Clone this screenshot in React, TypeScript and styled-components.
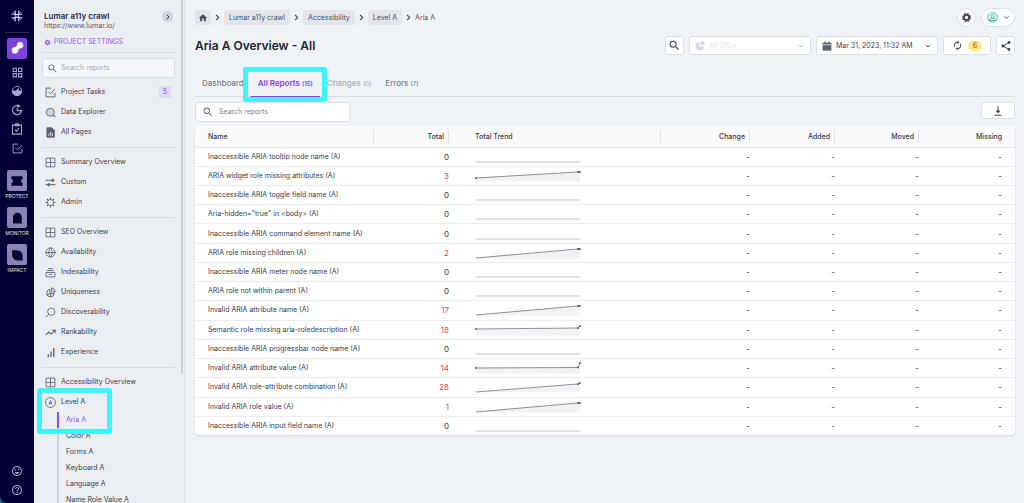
import React from "react";
import styled, { createGlobalStyle, css } from "styled-components";
import {
  MdSearch,
  MdOutlineGridView,
  MdHelpOutline,
  MdOutlineEmojiEmotions,
  MdHome,
  MdShare,
  MdAutorenew,
} from "react-icons/md";
import { HiCog } from "react-icons/hi";
import { ChevronDown, ChevronRight, Globe, TrendingUp } from "lucide-react";

const GlobalStyle = createGlobalStyle`
  *, *::before, *::after { box-sizing: border-box; }
  html, body { margin: 0; height: 100%; overflow: hidden; }
  body { font-family: Inter, "Liberation Sans", sans-serif; font-size: 7px; line-height: 10px; color: #353b4a; background: #1f6391; }
  #root { height: 100%; }
  ul, ol { list-style: none; margin: 0; padding: 0; }
  a { color: inherit; text-decoration: none; }
  button, input, select { font: inherit; color: inherit; margin: 0; }
  button { cursor: pointer; }
  svg { display: block; flex: none; }
`;

const Shell = styled.div`
  display: flex;
  height: 100vh;
  overflow: hidden;
  border-radius: 0 0 0 6px;
  background: #eff3f8;
`;

/* ---------- icon rail ---------- */

const Rail = styled.nav`
  flex: none;
  width: 34px;
  display: flex;
  flex-direction: column;
  align-items: center;
  padding: 8px 0 7px;
  background: #020034;
  color: #a9a4cb;
`;

const RailDivider = styled.hr`
  width: 24px;
  height: 1px;
  margin: 8px 0 5px;
  border: 0;
  background: #2c2a4e;
`;

const RailGroup = styled.div`
  display: flex;
  flex-direction: column;
  align-items: center;
  gap: 7px;
`;

const RailLink = styled.a`
  display: flex;
  align-items: center;
  justify-content: center;
  width: 20px;
  height: 12px;
`;

const RailActive = styled.a`
  display: flex;
  align-items: center;
  justify-content: center;
  width: 20px;
  height: 21px;
  border-radius: 2px;
  background: #7c42de;
  color: #fff;
`;

const RailProduct = styled.a`
  display: flex;
  flex-direction: column;
  align-items: center;
  gap: 1px;
  font-size: 5px;
  line-height: 8px;
  color: #e4e1f2;
`;

const ProductTile = styled.span`
  display: flex;
  align-items: center;
  justify-content: center;
  width: 20px;
  height: 21px;
  border-radius: 2px;
  background: #8d82b4;
  color: #020034;
`;

const RailProducts = styled(RailGroup)`
  margin-top: 16px;
`;

const RailFooter = styled(RailGroup)`
  margin-top: auto;
`;

/* ---------- sidebar ---------- */

const Sidebar = styled.aside`
  flex: none;
  display: flex;
  width: 151px;
  border-right: 1px solid #dfe2ea;
  background: #eaedf2;
`;

const SidebarBody = styled.div`
  flex: 1;
  min-width: 0;
  padding: 11px 6px 0 8px;
`;

const ScrollTrack = styled.div`
  width: 3px;
`;

const ScrollThumb = styled.div`
  width: 2px;
  height: 374px;
  border-radius: 0 0 1px 1px;
  background: #cdd0da;
`;

const ProjectHeader = styled.header`
  display: flex;
  justify-content: space-between;
  padding: 0 2px;
`;

const ProjectName = styled.h2`
  margin: 0;
  font-size: 8px;
  line-height: 10px;
  font-weight: 600;
  color: #252b3b;
`;

const ProjectUrl = styled.p`
  margin: 0;
  color: #555b6b;
`;

const CollapseButton = styled.button`
  display: flex;
  align-items: center;
  justify-content: center;
  width: 11px;
  height: 11px;
  padding: 0;
  border: 0;
  border-radius: 50%;
  background: #ced2dc;
  color: #353b4a;
`;

const SettingsLink = styled.a`
  display: flex;
  align-items: center;
  gap: 3px;
  margin-top: 6px;
  padding: 0 2px 5px;
  color: #9257ea;
`;

const SearchField = styled.label<{ $wide?: boolean }>`
  display: flex;
  align-items: center;
  gap: ${(p) => (p.$wide ? "5px" : "3px")};
  width: ${(p) => (p.$wide ? "155px" : "100%")};
  height: 20px;
  padding: 0 5px;
  padding-left: ${(p) => (p.$wide ? "6px" : "4px")};
  border: 1px solid #d9dde5;
  border-radius: 3px;
  background: ${(p) => (p.$wide ? "#fff" : "#f5f7fb")};
  color: #666c7b;

  input {
    flex: 1;
    min-width: 0;
    padding: 0;
    border: 0;
    outline: 0;
    background: none;
    font-size: 7px;
  }
  input::placeholder {
    color: ${(p) => (p.$wide ? "#797e8b" : "#a3a7b1")};
    opacity: 1;
  }
`;

const Section = styled.ul`
  padding: 4px 0 5px;
  border-top: 1px solid #d8dbe2;
`;

const SearchSection = styled.div`
  padding-top: 5px;
  border-top: 1px solid #d8dbe2;

  & + ${Section} {
    border-top: 0;
  }
`;

const NavItem = styled.li`
  position: relative;
`;

const NavLink = styled.a`
  display: flex;
  align-items: center;
  gap: 5px;
  height: 20px;
  padding: 0 4px 0 3px;
  font-size: 7px;
  color: #3b4150;

  svg {
    color: #596070;
  }
`;

const NavCount = styled.span`
  margin-left: auto;
  width: 12px;
  border-radius: 2px;
  line-height: 12px;
  text-align: center;
  background: #e2d8f6;
  color: #8a4fe6;
`;

const SubLink = styled.a<{ $active?: boolean }>`
  display: block;
  height: 16px;
  margin-left: 15px;
  padding-left: 7px;
  border-left: 2px solid ${(p) => (p.$active ? "#8a4fe6" : "#cfd2dc")};
  line-height: 16px;
  color: ${(p) => (p.$active ? "#9257ea" : "#3b4150")};
`;

const highlight = css`
  position: absolute;
  z-index: 2;
  border: 5px solid #41f3fd;
  border-radius: 3px;
  pointer-events: none;
`;

const NavHighlight = styled.span`
  ${highlight}
  top: -4px;
  left: -5px;
  width: 75px;
  height: 46px;
`;

/* ---------- main area ---------- */

const Main = styled.main`
  flex: 1;
  min-width: 0;
  padding: 8px 9px 0 10px;
`;

const Row = styled.div`
  display: flex;
  align-items: center;
  justify-content: space-between;
`;

const Crumbs = styled.ol`
  display: flex;
  align-items: center;
  gap: 2px;
  color: #4a5060;

  li {
    display: flex;
    align-items: center;
    gap: 2px;
  }
`;

const Crumb = styled.a`
  display: flex;
  align-items: center;
  height: 15px;
  padding: 0 5px;
  border-radius: 3px;
  background: #e3e5eb;
`;

const HomeCrumb = styled(Crumb)`
  padding: 0 3px;
`;

const Actions = styled.div`
  display: flex;
  gap: 5px;
`;

const Button = styled.button<{ $w?: number; $round?: boolean; $short?: boolean }>`
  display: flex;
  align-items: center;
  justify-content: center;
  gap: 5px;
  width: ${(p) => p.$w ?? 19}px;
  height: ${(p) => (p.$short ? 17 : 19)}px;
  padding: 0;
  border: 1px solid #dcdfe7;
  border-radius: ${(p) => (p.$round ? "10px" : "3px")};
  background: #fff;
  color: #3c4253;
`;

const TitleRow = styled(Row)`
  margin-top: 9px;
`;

const Title = styled.h1`
  margin: 0;
  font-size: 12px;
  line-height: 16px;
  font-weight: 600;
  color: #1f2433;
`;

const SelectBox = styled.label<{ $muted?: boolean }>`
  display: flex;
  align-items: center;
  gap: 4px;
  width: 122px;
  height: 19px;
  padding: 0 5px;
  border: 1px solid #dcdfe7;
  border-radius: 3px;
  background: #fff;
  color: ${(p) => (p.$muted ? "#d9dbe0" : "#5a6070")};

  select {
    flex: 1;
    min-width: 0;
    padding: 0;
    border: 0;
    outline: 0;
    appearance: none;
    background: none;
    font-size: 7px;
    opacity: 1;
    color: ${(p) => (p.$muted ? "#e2e4e8" : "#3c4253")};
  }
`;

const Pill = styled.span`
  padding: 0 5px;
  border-radius: 5px;
  line-height: 10px;
  background: #fde68a;
  color: #a0521c;
`;

const Tabs = styled.nav`
  display: flex;
  height: 26px;
  margin-top: 16px;
  border-bottom: 1px solid #dadde5;
`;

const Tab = styled.a<{ $state?: "active" | "disabled" }>`
  position: relative;
  height: 26px;
  padding: 0 7px;
  font-size: 8px;
  line-height: 24px;
  font-weight: ${(p) => (p.$state === "active" ? 600 : 500)};
  color: ${(p) =>
    p.$state === "active" ? "#8145e0" : p.$state === "disabled" ? "#a9adb6" : "#777c89"};
  border-bottom: ${(p) => (p.$state === "active" ? "1px solid #8145e0" : "0")};

  small {
    font-size: 6px;
  }
`;

const TabHighlight = styled.span`
  ${highlight}
  inset: -4px -7px -6px -8px;
`;

const Toolbar = styled(Row)`
  align-items: flex-start;
  margin: 5px 0 4px;
`;

const TableCard = styled.div`
  overflow: hidden;
  border-radius: 4px;
  background: #fff;
  box-shadow: 0 1px 2px rgba(40, 50, 80, 0.14);
`;

const Table = styled.table`
  width: 100%;
  height: 309px;
  border-collapse: collapse;
  table-layout: fixed;
`;

const Col = styled.col<{ $w?: number }>`
  width: ${(p) => (p.$w ? `${p.$w}px` : "auto")};
`;

const HeadCell = styled.th<{ $right?: boolean }>`
  height: 21px;
  padding: 0;
  background: #fafafa;
  border-bottom: 1px solid #e6e8ec;
  font-weight: 500;
  text-align: ${(p) => (p.$right ? "right" : "left")};

  span {
    display: block;
    padding: 0 4px 0 ${(p) => (p.$right ? "0" : "26px")};
    border-right: 1px solid #e1e3e8;
    line-height: 13px;
  }
  &:first-child span {
    padding-left: 13px;
  }
  &:last-child span {
    padding-right: 13px;
    border-right: 0;
  }
`;

const BodyRow = styled.tr`
  border-bottom: 1px solid #eaecef;

  &:last-child {
    border-bottom: 0;
  }
`;

const Cell = styled.td<{ $right?: boolean; $alert?: boolean; $number?: boolean }>`
  padding: 0;
  text-align: ${(p) => (p.$right ? "right" : "left")};
  font-size: ${(p) => (p.$number ? "8px" : "7px")};
  color: ${(p) => (p.$alert ? "#ea3f4f" : "#353b4a")};

  &:first-child {
    padding-left: 13px;
  }
  &:last-child {
    padding-right: 13px;
  }
`;

const TrendCell = styled(Cell)`
  padding-left: 26px;
`;

/* ---------- drawings ---------- */

type IconProps = { size?: number; children: React.ReactNode; width?: number };

const Glyph = ({ size = 11, width = 1.5, children }: IconProps) => (
  <svg
    width={size}
    height={size}
    viewBox="0 0 20 20"
    fill="none"
    stroke="currentColor"
    strokeWidth={width}
    aria-hidden="true"
  >
    {children}
  </svg>
);

const LogoIcon = () => (
  <svg width="16" height="16" viewBox="0 0 32 32" fill="none" stroke="#d9c0f4" strokeWidth="2.400" aria-hidden="true">
    <path d="M12 5q2.500 11 0 22M20 5q-2.500 11 0 22M5 12q11 2.500 22 0M5 20q11-2.500 22 0" />
    <path d="M8 8l5 5M24 8l-5 5M8 24l5-5M24 24l-5-5" strokeWidth="1.400" />
  </svg>
);

const TaskIcon = ({ size }: { size?: number }) => (
  <Glyph size={size} width={1.7}>
    <path d="M11 2H2v16h16v-7M6 8.500l4 4 8-9" />
  </Glyph>
);

const ClipboardIcon = () => (
  <Glyph size={12} width={1.8}>
    <path d="M2.500 3.500h15v15h-15zM6.500 11l2.500 2.500 4.500-5" />
    <path d="M7 1h6v4H7z" fill="currentColor" strokeWidth="1" />
  </Glyph>
);

const GridIcon = () => (
  <Glyph>
    <path d="M2 2h16v16H2zM10 2v16M2 10h16" />
  </Glyph>
);

const ExplorerIcon = () => (
  <Glyph>
    <circle cx="9.500" cy="9.500" r="7.200" fill="#cfd3db" />
    <path d="M14.500 14.500l4 4" strokeWidth="2" />
  </Glyph>
);

const PagesIcon = () => (
  <Glyph>
    <path d="M3.500 1.500h9l4.500 4.500v12.500H3.500z" fill="currentColor" />
    <path d="M7 16v-4M10.300 16V9M13.500 16v-5" stroke="#eaedf3" strokeWidth="1.600" />
  </Glyph>
);

const SlidersIcon = () => (
  <Glyph width={1.8}>
    <path d="M1 6h12M8 14h11M1 14h3" />
    <path d="M13 3l4.500 3-4.500 3zM8 11l-4.500 3L8 17z" fill="currentColor" strokeWidth="1" />
  </Glyph>
);

const AdminIcon = () => (
  <Glyph>
    <circle cx="10" cy="10" r="5.600" />
    <path
      d="M10 1v3.400M10 15.600V19M1 10h3.400M15.600 10H19M3.600 3.600L6 6M14 14l2.400 2.400M3.600 16.400L6 14M14 6l2.400-2.400"
      strokeWidth="2"
    />
  </Glyph>
);

const StackIcon = () => (
  <Glyph>
    <path d="M2 10h16v8H2zM3.500 6.500h13M5.500 3h9M6.500 13.500h7" />
  </Glyph>
);

const UniqueIcon = () => (
  <Glyph width={1.7}>
    <path d="M9 4a7 7 0 1 0 8 8H9zM9 12l-5.500 2M9 12l3 6" />
    <path d="M12 1.500A8 8 0 0 1 18.500 9L12 9z" />
  </Glyph>
);

const DiscoverIcon = () => (
  <Glyph>
    <circle cx="11.500" cy="8.500" r="6.700" />
    <path d="M6.500 13.500L1.500 18.500" />
  </Glyph>
);

const BarsIcon = () => (
  <Glyph width={2.4}>
    <path d="M6 18v-5M11 18V8M16 18V2" />
  </Glyph>
);

const LevelIcon = () => (
  <Glyph>
    <circle cx="10" cy="10" r="9" />
    <path d="M7.300 13.500L10 6.500l2.700 7M8 11.700h4" strokeWidth="1.600" />
  </Glyph>
);

const GaugeIcon = () => (
  <Glyph size={12} width={1.5}>
    <circle cx="10" cy="10" r="7.800" />
    <path d="M2.500 10H8l5-4-1.500 4h6A7.500 7.500 0 0 1 2.500 10z" fill="currentColor" />
  </Glyph>
);

const CycleIcon = () => (
  <Glyph size={12} width={2}>
    <path d="M12 3A7.500 7.500 0 1 0 17.500 11H10M10 11V7" />
    <path d="M11 .8l4.500 2.600L11 6z" fill="currentColor" strokeWidth="1" />
  </Glyph>
);

const BlobIcon = () => (
  <Glyph size={13} width={1}>
    <path
      d="M9.500 5a4.500 4.500 0 0 1 9 0c0 3-2 4.500-5 4.500-1.500 0-2 .8-2.300 2.500-.5 3.500-2 5.500-5 5.500a4.700 4.700 0 0 1-4.700-4.700C1.500 9.800 3.500 8.300 6 8c2.500-.2 3.300-1 3.500-3z"
      fill="currentColor"
    />
  </Glyph>
);

const TrendGlyph = () => <TrendingUp size={11} strokeWidth={2.2} />;
const GlobeGlyph = () => <Globe size={11} strokeWidth={1.8} />;

const GearIcon = () => (
  <Glyph size={11} width={3.4}>
    <circle cx="10" cy="10" r="4.800" />
    <circle cx="10" cy="10" r="7" strokeWidth="2.400" strokeDasharray="3.200 2.300" />
  </Glyph>
);

const CalendarIcon = () => (
  <Glyph size={10}>
    <path d="M2 4h16v14.500H2z" fill="currentColor" strokeLinejoin="round" />
    <path d="M6 1v4M14 1v4" strokeWidth="2.500" />
    <path d="M2 7.500h16" stroke="#fff" strokeWidth="1.400" />
  </Glyph>
);

const PieIcon = () => (
  <Glyph size={10} width={0}>
    <path d="M9 2a8.500 8.500 0 1 0 9 9H9z" fill="currentColor" />
    <path d="M11.500 0A8.500 8.500 0 0 1 19.500 8.500h-8z" fill="currentColor" />
  </Glyph>
);

const UserIcon = () => (
  <svg width="11" height="11" viewBox="0 0 20 20" fill="none" stroke="#3fbf92" strokeWidth="1.600" aria-hidden="true">
    <circle cx="10" cy="10" r="8.800" fill="#e2f7ef" />
    <circle cx="10" cy="8" r="3" />
    <path d="M4.500 15.500c1-3 2.500-4 5.500-4s4.500 1 5.500 4M4.500 15.500h11" />
  </svg>
);

const DownloadIcon = () => (
  <Glyph size={10} width={2}>
    <path d="M10 1v12M3 18.500h14" />
    <path d="M6 9.500h8l-4 4.500z" fill="currentColor" strokeWidth="1" />
  </Glyph>
);

/* Each trend lists the heights of its three crawls; 12 is the zero line. */
const Sparkline = ({ points }: { points: number[] }) => {
  const xs = [1, 103, 105];
  const flat = points.every((y) => y === 12);
  const line = points.map((y, i) => `${xs[i]},${y}`).join(" ");
  return (
    <svg width="106" height="14" viewBox="0 0 106 14" aria-hidden="true">
      {!flat && <polygon points={`1,12.500 ${line} 105,12.500`} fill="#f1f2f4" />}
      <polyline points={line} fill="none" stroke={flat ? "#aeb2bb" : "#7d8390"} strokeWidth={flat ? 0.8 : 0.9} />
      {points.map((y, i) =>
        y === 12 ? null : <circle key={i} cx={xs[i]} cy={y} r="0.900" fill="#4a5060" />
      )}
    </svg>
  );
};

/* ---------- data ---------- */

const FLAT = [12, 12, 12];

const reports: { name: string; total: number; trend: number[] }[] = [
  { name: "Inaccessible ARIA tooltip node name (A)", total: 0, trend: FLAT },
  { name: "ARIA widget role missing attributes (A)", total: 3, trend: [9, 3, 3] },
  { name: "Inaccessible ARIA toggle field name (A)", total: 0, trend: FLAT },
  { name: 'Aria-hidden="true" in <body> (A)', total: 0, trend: FLAT },
  { name: "Inaccessible ARIA command element name (A)", total: 0, trend: FLAT },
  { name: "ARIA role missing children (A)", total: 2, trend: [12, 3, 3] },
  { name: "Inaccessible ARIA meter node name (A)", total: 0, trend: FLAT },
  { name: "ARIA role not within parent (A)", total: 0, trend: FLAT },
  { name: "Invalid ARIA attribute name (A)", total: 17, trend: [12, 3, 3] },
  { name: "Semantic role missing aria-roledescription (A)", total: 18, trend: [6, 5, 3] },
  { name: "Inaccessible ARIA progressbar node name (A)", total: 0, trend: FLAT },
  { name: "Invalid ARIA attribute value (A)", total: 14, trend: [7, 6.5, 2] },
  { name: "Invalid ARIA role-attribute combination (A)", total: 28, trend: [12, 4, 3] },
  { name: "Invalid ARIA role value (A)", total: 1, trend: [12, 3, 3] },
  { name: "Inaccessible ARIA input field name (A)", total: 0, trend: FLAT },
];

const navSections: { label: string; icon: React.ReactNode; count?: number }[][] = [
  [
    { label: "Project Tasks", icon: <TaskIcon />, count: 5 },
    { label: "Data Explorer", icon: <ExplorerIcon /> },
    { label: "All Pages", icon: <PagesIcon /> },
  ],
  [
    { label: "Summary Overview", icon: <GridIcon /> },
    { label: "Custom", icon: <SlidersIcon /> },
    { label: "Admin", icon: <AdminIcon /> },
  ],
  [
    { label: "SEO Overview", icon: <GridIcon /> },
    { label: "Availability", icon: <GlobeGlyph /> },
    { label: "Indexability", icon: <StackIcon /> },
    { label: "Uniqueness", icon: <UniqueIcon /> },
    { label: "Discoverability", icon: <DiscoverIcon /> },
    { label: "Rankability", icon: <TrendGlyph /> },
    { label: "Experience", icon: <BarsIcon /> },
  ],
];

const levelReports = ["Aria A", "Color A", "Forms A", "Keyboard A", "Language A", "Name Role Value A"];

const products = [
  { label: "PROTECT", shape: "M3 4h14v3.500c-2.500 0-2.500 5 0 5V16H3v-3.500c2.500 0 2.500-5 0-5z" },
  { label: "MONITOR", shape: "M5 17V9a5.500 5.500 0 0 1 11 0v8z" },
  { label: "IMPACT", shape: "M4 4h6a7 7 0 0 1 7 7v6h-6a7 7 0 0 1-7-7z" },
];

export default function App() {
  return (
    <>
      <GlobalStyle />
      <Shell>
        <Rail aria-label="Products">
          <a href="#home" aria-label="Home">
            <LogoIcon />
          </a>
          <RailDivider />
          <RailGroup>
            <RailActive href="#analyze" aria-label="Analyze">
              <BlobIcon />
            </RailActive>
            <RailLink href="#projects" aria-label="Projects">
              <MdOutlineGridView size={13} />
            </RailLink>
            <RailLink href="#usage" aria-label="Usage">
              <GaugeIcon />
            </RailLink>
            <RailLink href="#crawls" aria-label="Crawls">
              <CycleIcon />
            </RailLink>
            <RailLink href="#reports" aria-label="Reports">
              <ClipboardIcon />
            </RailLink>
            <RailLink href="#tasks" aria-label="Tasks">
              <TaskIcon size={11} />
            </RailLink>
          </RailGroup>
          <RailProducts>
            {products.map((p) => (
              <RailProduct key={p.label} href={`#${p.label.toLowerCase()}`}>
                <ProductTile>
                  <svg width="16" height="16" viewBox="0 0 20 20" fill="currentColor" aria-hidden="true">
                    <path d={p.shape} />
                  </svg>
                </ProductTile>
                {p.label}
              </RailProduct>
            ))}
          </RailProducts>
          <RailFooter>
            <RailLink href="#feedback" aria-label="Feedback">
              <MdOutlineEmojiEmotions size={12} />
            </RailLink>
            <RailLink href="#help" aria-label="Help">
              <MdHelpOutline size={12} />
            </RailLink>
          </RailFooter>
        </Rail>

        <Sidebar>
          <SidebarBody>
            <ProjectHeader>
              <div>
                <ProjectName>Lumar a11y crawl</ProjectName>
                <ProjectUrl>https://www.lumar.io/</ProjectUrl>
              </div>
              <CollapseButton aria-label="Collapse sidebar">
                <ChevronRight size={8} strokeWidth={3} />
              </CollapseButton>
            </ProjectHeader>
            <SettingsLink href="#settings">
              <HiCog size={7} />
              PROJECT SETTINGS
            </SettingsLink>
            <SearchSection>
              <SearchField>
                <MdSearch size={11} />
                <input type="search" placeholder="Search reports" aria-label="Search reports" />
              </SearchField>
            </SearchSection>
            {navSections.map((items) => (
              <Section key={items[0].label}>
                {items.map((item) => (
                  <NavItem key={item.label}>
                    <NavLink href="#nav">
                      {item.icon}
                      {item.label}
                      {item.count && <NavCount>{item.count}</NavCount>}
                    </NavLink>
                  </NavItem>
                ))}
              </Section>
            ))}
            <Section>
              <NavItem>
                <NavLink href="#nav">
                  <GridIcon />
                  Accessibility Overview
                </NavLink>
              </NavItem>
              <NavItem>
                <NavLink href="#nav">
                  <LevelIcon />
                  Level A
                </NavLink>
                <ul>
                  {levelReports.map((label, i) => (
                    <li key={label}>
                      <SubLink href="#nav" $active={i === 0}>
                        {label}
                      </SubLink>
                    </li>
                  ))}
                </ul>
                <NavHighlight />
              </NavItem>
            </Section>
          </SidebarBody>
          <ScrollTrack>
            <ScrollThumb />
          </ScrollTrack>
        </Sidebar>

        <Main>
          <Row>
            <Crumbs>
              <li>
                <HomeCrumb href="#home" aria-label="Home">
                  <MdHome size={10} />
                </HomeCrumb>
              </li>
              {["Lumar a11y crawl", "Accessibility", "Level A"].map((label) => (
                <li key={label}>
                  <ChevronRight size={9} strokeWidth={3} />
                  <Crumb href="#crumb">{label}</Crumb>
                </li>
              ))}
              <li>
                <ChevronRight size={9} strokeWidth={3} />
                <span aria-current="page">Aria A</span>
              </li>
            </Crumbs>
            <Actions>
              <Button $round aria-label="Settings">
                <GearIcon />
              </Button>
              <Button $round $w={34} aria-label="Account">
                <UserIcon />
                <ChevronDown size={7} strokeWidth={3} />
              </Button>
            </Actions>
          </Row>

          <TitleRow>
            <Title>Aria A Overview - All</Title>
            <Actions>
              <Button aria-label="Search">
                <MdSearch size={13} />
              </Button>
              <SelectBox $muted>
                <PieIcon />
                <select disabled aria-label="Segment">
                  <option>All URLs</option>
                </select>
                <ChevronDown size={8} strokeWidth={3} color="#b9bdc6" />
              </SelectBox>
              <SelectBox>
                <CalendarIcon />
                <select aria-label="Crawl date">
                  <option>Mar 31, 2023, 11:32 AM</option>
                </select>
                <ChevronDown size={8} strokeWidth={3} />
              </SelectBox>
              <Button $w={48} aria-label="Running crawls: 6">
                <MdAutorenew size={11} />
                <Pill>6</Pill>
              </Button>
              <Button aria-label="Share">
                <MdShare size={12} />
              </Button>
            </Actions>
          </TitleRow>

          <Tabs>
            <Tab href="#dashboard">Dashboard</Tab>
            <Tab href="#all" $state="active">
              All Reports <small>(15)</small>
              <TabHighlight />
            </Tab>
            <Tab href="#changes" $state="disabled">
              Changes <small>(0)</small>
            </Tab>
            <Tab href="#errors">
              Errors <small>(7)</small>
            </Tab>
          </Tabs>

          <Toolbar>
            <SearchField $wide>
              <MdSearch size={12} />
              <input type="search" placeholder="Search reports" aria-label="Search table" />
            </SearchField>
            <Button $w={34} $short aria-label="Download">
              <DownloadIcon />
            </Button>
          </Toolbar>

          <TableCard>
            <Table>
              <colgroup>
                <Col $w={179} />
                <Col $w={75} />
                <Col />
                <Col $w={89} />
                <Col $w={85} />
                <Col $w={84} />
                <Col $w={96} />
              </colgroup>
              <thead>
                <tr>
                  <HeadCell><span>Name</span></HeadCell>
                  <HeadCell $right><span>Total</span></HeadCell>
                  <HeadCell><span>Total Trend</span></HeadCell>
                  <HeadCell $right><span>Change</span></HeadCell>
                  <HeadCell $right><span>Added</span></HeadCell>
                  <HeadCell $right><span>Moved</span></HeadCell>
                  <HeadCell $right><span>Missing</span></HeadCell>
                </tr>
              </thead>
              <tbody>
                {reports.map((r) => (
                  <BodyRow key={r.name}>
                    <Cell>{r.name}</Cell>
                    <Cell $right $number $alert={r.total > 0}>{r.total}</Cell>
                    <TrendCell>
                      <Sparkline points={r.trend} />
                    </TrendCell>
                    <Cell $right $number>-</Cell>
                    <Cell $right $number>-</Cell>
                    <Cell $right $number>-</Cell>
                    <Cell $right $number>-</Cell>
                  </BodyRow>
                ))}
              </tbody>
            </Table>
          </TableCard>
        </Main>
      </Shell>
    </>
  );
}
